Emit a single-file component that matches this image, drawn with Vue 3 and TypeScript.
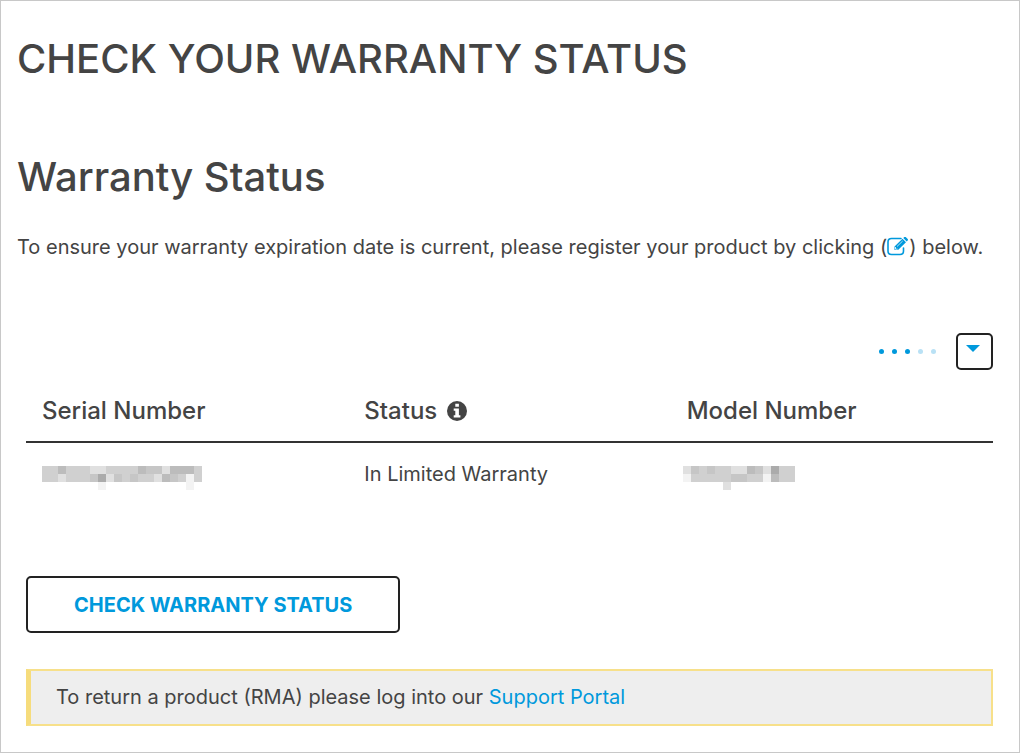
<script setup lang="ts">
interface Mosaic {
  label: string
  rows: string[]
}

// Each hex digit is one grey tile of the obscured value; a dot is an empty tile.
const greys: Record<string, string> = {
  a: '#ababab',
  b: '#bcbcbc',
  c: '#c6c6c6',
  d: '#d0d0d0',
  e: '#e0e0e0',
  f: '#f3f3f3',
}

const serial: Mosaic = {
  label: 'Hidden serial number',
  rows: ['ddbdddeeddddbccebbbd', 'ddedddcaecdcddebcdfd', '.......f..........f.'],
}

const model: Mosaic = {
  label: 'Hidden model number',
  rows: ['ecdcddeebceadd', 'fdddddccddfbdd', '.....e........'],
}

const dots: boolean[] = [true, true, true, false, false]

function tiles(m: Mosaic) {
  return m.rows.flatMap((row, y) =>
    [...row].map((key, x) => ({ x: x * 8, y: y * 8, fill: greys[key] ?? 'none' })),
  )
}
</script>

<template>
  <main class="page">
    <h1>CHECK YOUR WARRANTY STATUS</h1>
    <h2>Warranty Status</h2>
    <p class="intro">
      To ensure your warranty expiration date is current, please register your product by clicking
      (<svg class="edit" viewBox="0 0 22 19" aria-hidden="true">
        <path
          d="M14 1.5H4.5Q1 1.5 1 5v9q0 3.500 3.500 3.500h8.500q3.500 0 3.500-3.500v-3"
          fill="none"
          stroke="currentColor"
          stroke-width="1.600"
          stroke-linecap="round"
        />
        <path
          d="M7.500 9.500 15.500 1.800l3.500 3.400-8 7.900H7.500z M16.300 1l1-1q.7-.5 1.400 0l2 2q.6.700 0 1.400l-1 1z"
          fill="currentColor"
        />
        <path d="M10 9.500 15.700 4" stroke="#fff" stroke-width=".7" />
        <path d="M8.500 10v2.200h2.200" fill="none" stroke="#fff" stroke-width=".8" />
      </svg>) below.
    </p>

    <div class="tools">
      <div class="dots">
        <span v-for="(on, i) in dots" :key="i" class="dot" :class="{ on }"></span>
      </div>
      <button type="button" class="toggle" aria-label="Show actions">
        <svg viewBox="0 0 12 6" aria-hidden="true"><path d="M0 0h12L6 6z" fill="currentColor" /></svg>
      </button>
    </div>

    <table>
      <thead>
        <tr>
          <th scope="col">Serial Number</th>
          <th scope="col">
            <span class="status">
              Status
              <svg viewBox="0 0 20 20" aria-hidden="true">
                <circle cx="10" cy="10" r="10" fill="currentColor" />
                <path
                  d="M8.300 2.800h3.600v3H8.300z M6.700 7.500h5.200v6.800h1.500v2.200H6.700v-2.200h1.600V9.700H6.700z"
                  fill="#fff"
                />
              </svg>
            </span>
          </th>
          <th scope="col">Model Number</th>
        </tr>
      </thead>
      <tbody>
        <tr>
          <td>
            <svg class="mosaic serial" viewBox="0 0 160 24" role="img" :aria-label="serial.label">
              <rect v-for="(t, i) in tiles(serial)" :key="i" :x="t.x" :y="t.y" width="8" height="8" :fill="t.fill" />
            </svg>
          </td>
          <td>In Limited Warranty</td>
          <td>
            <svg class="mosaic model" viewBox="0 0 112 24" role="img" :aria-label="model.label">
              <rect v-for="(t, i) in tiles(model)" :key="i" :x="t.x" :y="t.y" width="8" height="8" :fill="t.fill" />
            </svg>
          </td>
        </tr>
      </tbody>
    </table>

    <button type="button" class="check">CHECK WARRANTY STATUS</button>

    <p class="notice">
      To return a product (RMA) please log into our <a href="#support">Support Portal</a>
    </p>
  </main>
</template>

<style>
body {
  margin: 0;
  background: #fff;
}
</style>

<style scoped>
.page {
  box-sizing: border-box;
  min-height: 100vh;
  padding: 34px 26px 24px 16px;
  border: 1px solid #c8c8c8;
  background: #fff;
  color: #444;
  font-family: Inter, "Liberation Sans", sans-serif;
  font-size: 20px;
  line-height: 28px;
}

h1,
h2 {
  margin: 0;
  font-weight: 500;
  font-size: 40px;
  line-height: 48px;
}

h2 {
  margin-top: 70px;
}

.intro {
  margin: 32px 0 0;
  white-space: nowrap;
}

.edit {
  width: 22px;
  height: 19px;
  vertical-align: -2px;
  color: #0099dc;
}

.tools {
  display: flex;
  justify-content: flex-end;
  align-items: center;
  gap: 20px;
  margin-top: 72px;
}

.dots {
  display: flex;
  gap: 8px;
}

.dot {
  width: 5px;
  height: 5px;
  border-radius: 50%;
  background: #b9e1f5;
}

.dot.on {
  background: #0099dc;
}

button {
  border: 2px solid #222;
  border-radius: 5px;
  background: #fff;
  color: #0099dc;
  font: inherit;
  cursor: pointer;
}

.toggle {
  display: flex;
  justify-content: center;
  align-items: center;
  width: 37px;
  height: 37px;
  padding: 0 4px 6px 0;
}

.toggle svg {
  width: 14px;
  height: 7px;
}

table {
  width: calc(100% - 9px);
  margin: 10px 0 0 9px;
  border-collapse: collapse;
  table-layout: fixed;
}

th,
td {
  padding: 0 16px;
  text-align: left;
}

th {
  height: 61px;
  border-bottom: 2px solid #333;
  font-weight: 500;
  font-size: 24px;
}

td {
  height: 62px;
}

td:last-child {
  padding-left: 12px;
}

.status {
  display: flex;
  align-items: center;
  gap: 10px;
}

.status svg {
  width: 20px;
  height: 20px;
}

.mosaic {
  display: block;
  height: 24px;
  margin-top: 8px;
  shape-rendering: crispEdges;
}

.serial {
  width: 160px;
}

.model {
  width: 112px;
}

.check {
  display: block;
  margin: 71px 0 0 9px;
  padding: 14px 46px 12px;
  font-weight: 700;
  font-size: 20px;
  line-height: 27px;
}

.notice {
  margin: 36px 0 0 9px;
  padding: 12px 25px 13px;
  border: 2px solid #f7e08a;
  border-left: 5px solid #f6dc7c;
  background: #eee;
}

a {
  color: #0099dc;
  text-decoration: none;
}
</style>
